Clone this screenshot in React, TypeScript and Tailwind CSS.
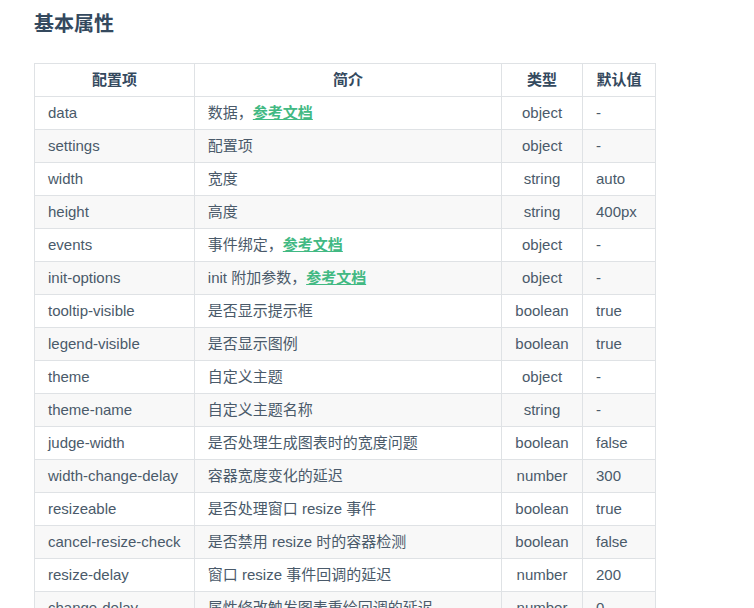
const rows: [string, any, string, string][] = [
  ["data", ["数据，", "参考文档"], "object", "-"],
  ["settings", "配置项", "object", "-"],
  ["width", "宽度", "string", "auto"],
  ["height", "高度", "string", "400px"],
  ["events", ["事件绑定，", "参考文档"], "object", "-"],
  ["init-options", ["init 附加参数，", "参考文档"], "object", "-"],
  ["tooltip-visible", "是否显示提示框", "boolean", "true"],
  ["legend-visible", "是否显示图例", "boolean", "true"],
  ["theme", "自定义主题", "object", "-"],
  ["theme-name", "自定义主题名称", "string", "-"],
  ["judge-width", "是否处理生成图表时的宽度问题", "boolean", "false"],
  ["width-change-delay", "容器宽度变化的延迟", "number", "300"],
  ["resizeable", "是否处理窗口 resize 事件", "boolean", "true"],
  ["cancel-resize-check", "是否禁用 resize 时的容器检测", "boolean", "false"],
  ["resize-delay", "窗口 resize 事件回调的延迟", "number", "200"],
  ["change-delay", "属性修改触发图表重绘回调的延迟", "number", "0"],
];
export default function App() {
  return (
    <div className="w-[754px] h-[608px] overflow-hidden bg-white text-[#34495e]" style={{ fontFamily: '"Liberation Sans", "Noto Sans CJK SC", sans-serif' }}>
      <div className="pl-[34px] pt-[10px]">
        <h2 className="text-[20px] font-bold leading-[28px] h-[53px]">基本属性</h2>
        <table className="border-collapse text-[15px] w-[622px]">
          <thead>
            <tr className="h-[33px]">
              <th className="border border-[#dfe2e5] w-[160px] font-bold">配置项</th>
              <th className="border border-[#dfe2e5] w-[308px] font-bold">简介</th>
              <th className="border border-[#dfe2e5] w-[81px] font-bold">类型</th>
              <th className="border border-[#dfe2e5] w-[73px] font-bold">默认值</th>
            </tr>
          </thead>
          <tbody>
            {rows.map((r, i) => (
              <tr key={i} className={`h-[33px] ${i % 2 === 1 ? "bg-[#f8f8f8]" : ""}`}>
                <td className="border border-[#dfe2e5] px-[13px] text-[#4a5a6a]">{r[0]}</td>
                <td className="border border-[#dfe2e5] px-[13px] text-[#4a5a6a]">
                  {Array.isArray(r[1]) ? (<>{r[1][0]}<a className="text-[#42b983] font-bold underline">{r[1][1]}</a></>) : r[1]}
                </td>
                <td className="border border-[#dfe2e5] text-center text-[#4a5a6a]">{r[2]}</td>
                <td className="border border-[#dfe2e5] px-[13px] text-[#4a5a6a]">{r[3]}</td>
              </tr>
            ))}
          </tbody>
        </table>
      </div>
    </div>
  );
}
